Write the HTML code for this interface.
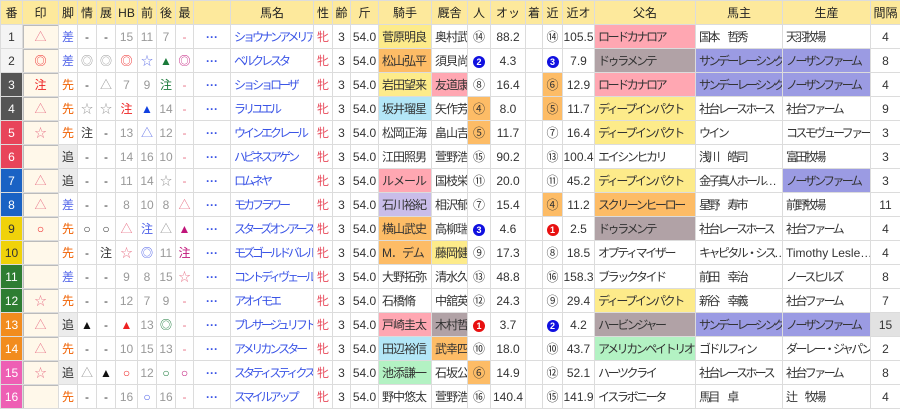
<!DOCTYPE html>
<html><head><meta charset="utf-8"><style>
body{margin:0;background:#fff;font-family:"Liberation Sans","Noto Sans CJK JP",sans-serif;}
table{border-collapse:collapse;table-layout:fixed;width:900px;}
td,th{border:1px solid #dcdcdc;height:23px;padding:0;text-align:center;font-size:12px;white-space:nowrap;overflow:hidden;color:#333;font-weight:normal;}
th{background:#fde99c;color:#222;}
tr{height:24px;}
td:nth-child(11){letter-spacing:-3px;}
td:nth-child(22){letter-spacing:-2.4px;}
td:nth-child(23),td:nth-child(24){letter-spacing:-2.6px;}
td:nth-child(15),td:nth-child(16){letter-spacing:-1px;}
.l{text-align:left;padding-left:3px;}
.nm{text-align:left;padding-left:3px;color:#3b55e6;}
.g{color:#999;}.r{color:#e22;}.pk{color:#e8768a;}.bu{color:#4a5ee8;}.o{color:#f06000;}.gr{color:#1a7a3a;}.mg{color:#c0157a;}.bk{color:#111;}.lb{color:#6a7ae8;}
.sx{color:#e84a5a;}.dots{color:#3b55e6;font-weight:bold;}
.mk{background:#fff8ea;box-shadow:inset 1px 1px 0 #bbb;}
.oi{background:#ececec;}
.Y{background:#fdeb8a;}.O{background:#fdbc66;}.P{background:#ffa7b2;}.L{background:#c9bde9;}.LB{background:#b3e6f7;}.G{background:#b3f2c3;}.M{background:#b1a2a6;}.B{background:#9b9be3;}.GY{background:#e2e2e2;}
.n1{background:#f4f4f4;}.n3{background:#555;color:#fff;}.n5{background:#e8445a;color:#fff;}.n7{background:#1a62c4;color:#fff;}.n9{background:#f0d20a;color:#333;}.n11{background:#2e7d32;color:#fff;}.n13{background:#f28c1e;color:#fff;}.n15{background:#ee5fb4;color:#fff;}
.c{display:inline-block;width:12px;height:12px;border-radius:50%;color:#fff;font-size:9px;line-height:12px;font-weight:bold;letter-spacing:0;}
.cb{background:#1010e0;}.cr{background:#e81010;}
</style></head><body>
<table>
<colgroup><col style="width:22px"><col style="width:36px"><col style="width:19px"><col style="width:19px"><col style="width:19px"><col style="width:22px"><col style="width:19px"><col style="width:19px"><col style="width:18px"><col style="width:37px"><col style="width:83px"><col style="width:19px"><col style="width:18px"><col style="width:28px"><col style="width:53px"><col style="width:36px"><col style="width:23px"><col style="width:35px"><col style="width:17px"><col style="width:20px"><col style="width:32px"><col style="width:101px"><col style="width:87px"><col style="width:88px"><col style="width:30px"></colgroup>
<tr><th>番</th><th>印</th><th>脚</th><th>情</th><th>展</th><th>HB</th><th>前</th><th>後</th><th>最</th><th></th><th>馬名</th><th>性</th><th>齢</th><th>斤</th><th>騎手</th><th>厩舎</th><th>人</th><th>オッ</th><th>着</th><th>近</th><th>近オ</th><th>父名</th><th>馬主</th><th>生産</th><th>間隔</th></tr>
<tr><td class="n1">1</td><td class="mk pk">△</td><td class="bu">差</td><td>-</td><td>-</td><td class="g">15</td><td class="g">11</td><td class="g">7</td><td class="pk">-</td><td class="dots">···</td><td class="nm">ショウナンアメリア</td><td class="sx">牝</td><td>3</td><td>54.0</td><td class="l Y">菅原明良</td><td class="l">奥村武</td><td>⑭</td><td>88.2</td><td></td><td>⑭</td><td>105.5</td><td class="l P">ロードカナロア</td><td class="l">国本　哲秀</td><td class="l">天羽牧場</td><td>4</td></tr>
<tr><td class="n1">2</td><td class="mk r">◎</td><td class="bu">差</td><td class="g">◎</td><td class="g">◎</td><td class="r">◎</td><td class="lb">☆</td><td class="gr">▲</td><td class="mg">◎</td><td class="dots">···</td><td class="nm">ベルクレスタ</td><td class="sx">牝</td><td>3</td><td>54.0</td><td class="l O">松山弘平</td><td class="l">須貝尚</td><td><span class="c cb">2</span></td><td>4.3</td><td></td><td><span class="c cb">3</span></td><td>7.9</td><td class="l M">ドゥラメンテ</td><td class="l B">サンデーレーシング</td><td class="l B">ノーザンファーム</td><td>8</td></tr>
<tr><td class="n3">3</td><td class="mk r">注</td><td class="o">先</td><td>-</td><td class="g">△</td><td class="g">7</td><td class="g">9</td><td class="gr">注</td><td class="pk">-</td><td class="dots">···</td><td class="nm">ショショローザ</td><td class="sx">牝</td><td>3</td><td>54.0</td><td class="l Y">岩田望来</td><td class="l P">友道康</td><td>⑧</td><td>16.4</td><td></td><td class="O">⑥</td><td>12.9</td><td class="l P">ロードカナロア</td><td class="l B">サンデーレーシング</td><td class="l B">ノーザンファーム</td><td>4</td></tr>
<tr><td class="n3">4</td><td class="mk pk">△</td><td class="o">先</td><td class="g">☆</td><td class="g">☆</td><td class="r">注</td><td style="color:#1040e0">▲</td><td class="g">14</td><td class="pk">-</td><td class="dots">···</td><td class="nm">ラリユエル</td><td class="sx">牝</td><td>3</td><td>54.0</td><td class="l LB">坂井瑠星</td><td class="l">矢作芳</td><td class="O">④</td><td>8.0</td><td></td><td class="O">⑤</td><td>11.7</td><td class="l Y">ディープインパクト</td><td class="l">社台レースホース</td><td class="l">社台ファーム</td><td>9</td></tr>
<tr><td class="n5">5</td><td class="mk pk">☆</td><td class="o">先</td><td>注</td><td>-</td><td class="g">13</td><td class="lb">△</td><td class="g">12</td><td class="pk">-</td><td class="dots">···</td><td class="nm">ウインエクレール</td><td class="sx">牝</td><td>3</td><td>54.0</td><td class="l">松岡正海</td><td class="l">畠山吉</td><td class="O">⑤</td><td>11.7</td><td></td><td>⑦</td><td>16.4</td><td class="l Y">ディープインパクト</td><td class="l">ウイン</td><td class="l">コスモヴューファーム</td><td>3</td></tr>
<tr><td class="n5">6</td><td class="mk"></td><td class="oi">追</td><td>-</td><td>-</td><td class="g">14</td><td class="g">16</td><td class="g">10</td><td class="pk">-</td><td class="dots">···</td><td class="nm">ハピネスアゲン</td><td class="sx">牝</td><td>3</td><td>54.0</td><td class="l">江田照男</td><td class="l">萱野浩</td><td>⑮</td><td>90.2</td><td></td><td>⑬</td><td>100.4</td><td class="l">エイシンヒカリ</td><td class="l">浅川　皓司</td><td class="l">富田牧場</td><td>3</td></tr>
<tr><td class="n7">7</td><td class="mk pk">△</td><td class="oi">追</td><td>-</td><td>-</td><td class="g">11</td><td class="g">14</td><td class="g">☆</td><td class="pk">-</td><td class="dots">···</td><td class="nm">ロムネヤ</td><td class="sx">牝</td><td>3</td><td>54.0</td><td class="l P">ルメール</td><td class="l">国枝栄</td><td>⑪</td><td>20.0</td><td></td><td>⑪</td><td>45.2</td><td class="l Y">ディープインパクト</td><td class="l">金子真人ホール…</td><td class="l B">ノーザンファーム</td><td>3</td></tr>
<tr><td class="n7">8</td><td class="mk pk">△</td><td class="bu">差</td><td>-</td><td>-</td><td class="g">8</td><td class="g">10</td><td class="g">8</td><td class="pk">△</td><td class="dots">···</td><td class="nm">モカフラワー</td><td class="sx">牝</td><td>3</td><td>54.0</td><td class="l L">石川裕紀</td><td class="l">相沢郁</td><td>⑦</td><td>15.4</td><td></td><td class="O">④</td><td>11.2</td><td class="l O">スクリーンヒーロー</td><td class="l">星野　寿市</td><td class="l">前野牧場</td><td>11</td></tr>
<tr><td class="n9">9</td><td class="mk r">○</td><td class="o">先</td><td>○</td><td>○</td><td class="pk">△</td><td class="bu">注</td><td class="g">△</td><td class="mg">▲</td><td class="dots">···</td><td class="nm">スターズオンアース</td><td class="sx">牝</td><td>3</td><td>54.0</td><td class="l O">横山武史</td><td class="l">高柳瑞</td><td><span class="c cb">3</span></td><td>4.6</td><td></td><td><span class="c cr">1</span></td><td>2.5</td><td class="l M">ドゥラメンテ</td><td class="l">社台レースホース</td><td class="l">社台ファーム</td><td>4</td></tr>
<tr><td class="n9">10</td><td class="mk"></td><td class="o">先</td><td>-</td><td>注</td><td class="pk">☆</td><td class="bu">◎</td><td class="g">11</td><td class="mg">注</td><td class="dots">···</td><td class="nm">モズゴールドバレル</td><td class="sx">牝</td><td>3</td><td>54.0</td><td class="l O">M．デム</td><td class="l Y">藤岡健</td><td>⑨</td><td>17.3</td><td></td><td>⑧</td><td>18.5</td><td class="l">オプティマイザー</td><td class="l">キャピタル・シス…</td><td class="l" style="letter-spacing:0">Timothy Lesle…</td><td>4</td></tr>
<tr><td class="n11">11</td><td class="mk"></td><td class="bu">差</td><td>-</td><td>-</td><td class="g">9</td><td class="g">8</td><td class="g">15</td><td class="pk">☆</td><td class="dots">···</td><td class="nm">コントディヴェール</td><td class="sx">牝</td><td>3</td><td>54.0</td><td class="l">大野拓弥</td><td class="l">清水久</td><td>⑬</td><td>48.8</td><td></td><td>⑯</td><td>158.3</td><td class="l">ブラックタイド</td><td class="l">前田　幸治</td><td class="l">ノースヒルズ</td><td>8</td></tr>
<tr><td class="n11">12</td><td class="mk pk">☆</td><td class="o">先</td><td>-</td><td>-</td><td class="g">12</td><td class="g">7</td><td class="g">9</td><td class="pk">-</td><td class="dots">···</td><td class="nm">アオイモエ</td><td class="sx">牝</td><td>3</td><td>54.0</td><td class="l">石橋脩</td><td class="l">中舘英</td><td>⑫</td><td>24.3</td><td></td><td>⑨</td><td>29.4</td><td class="l Y">ディープインパクト</td><td class="l">新谷　幸義</td><td class="l">社台ファーム</td><td>7</td></tr>
<tr><td class="n13">13</td><td class="mk pk">△</td><td class="oi">追</td><td class="bk">▲</td><td>-</td><td class="r">▲</td><td class="g">13</td><td class="gr">◎</td><td class="pk">-</td><td class="dots">···</td><td class="nm">プレサージュリフト</td><td class="sx">牝</td><td>3</td><td>54.0</td><td class="l P">戸崎圭太</td><td class="l M">木村哲</td><td><span class="c cr">1</span></td><td>3.7</td><td></td><td><span class="c cb">2</span></td><td>4.2</td><td class="l M">ハービンジャー</td><td class="l B">サンデーレーシング</td><td class="l B">ノーザンファーム</td><td class="GY">15</td></tr>
<tr><td class="n13">14</td><td class="mk pk">△</td><td class="o">先</td><td>-</td><td>-</td><td class="g">10</td><td class="g">15</td><td class="g">13</td><td class="pk">-</td><td class="dots">···</td><td class="nm">アメリカンスター</td><td class="sx">牝</td><td>3</td><td>54.0</td><td class="l LB">田辺裕信</td><td class="l O">武幸四</td><td>⑩</td><td>18.0</td><td></td><td>⑩</td><td>43.7</td><td class="l G">アメリカンペイトリオ…</td><td class="l">ゴドルフィン</td><td class="l">ダーレー・ジャパン…</td><td>2</td></tr>
<tr><td class="n15">15</td><td class="mk pk">☆</td><td class="oi">追</td><td class="g">△</td><td class="bk">▲</td><td class="r">○</td><td class="g">12</td><td class="gr">○</td><td class="mg">○</td><td class="dots">···</td><td class="nm">スタティスティクス</td><td class="sx">牝</td><td>3</td><td>54.0</td><td class="l G">池添謙一</td><td class="l">石坂公</td><td class="O">⑥</td><td>14.9</td><td></td><td>⑫</td><td>52.1</td><td class="l">ハーツクライ</td><td class="l">社台レースホース</td><td class="l">社台ファーム</td><td>8</td></tr>
<tr><td class="n15">16</td><td class="mk"></td><td class="o">先</td><td>-</td><td>-</td><td class="g">16</td><td class="bu">○</td><td class="g">16</td><td class="pk">-</td><td class="dots">···</td><td class="nm">スマイルアップ</td><td class="sx">牝</td><td>3</td><td>54.0</td><td class="l">野中悠太</td><td class="l">萱野浩</td><td>⑯</td><td>140.4</td><td></td><td>⑮</td><td>141.9</td><td class="l">イスラボニータ</td><td class="l">馬目　卓</td><td class="l">辻　牧場</td><td>4</td></tr>
</table>
</body></html>
